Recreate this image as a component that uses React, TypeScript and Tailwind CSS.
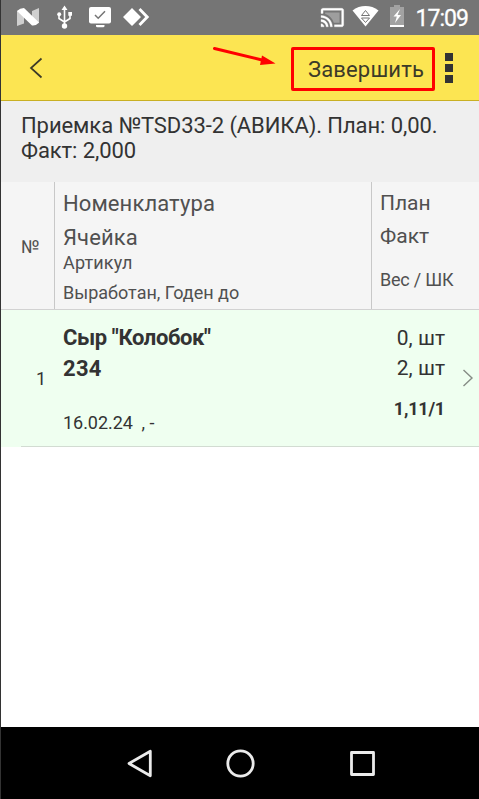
import React from "react";

const rows = [
  {
    id: 1,
    name: 'Сыр "Колобок"',
    cell: "234",
    dates: "16.02.24\u00a0 , -",
    plan: "0, шт",
    fact: "2, шт",
    weight: "1,11/1",
  },
];

function StatusBar() {
  return (
    <div className="h-[35px] shrink-0 bg-[#757575] text-white">
      <svg width="478" height="35" viewBox="1 0 478 35" fill="currentColor">
        {/* android N */}
        <path d="M17 11l7-2v14.500l-7 2.500zM32 11l7-3v15l-7 2z" opacity="0.65" />
        <path d="M17 11Q20 8 24 8L39 22.500Q36 26 32 25.500z" />
        {/* usb */}
        <g stroke="currentColor" strokeWidth="1.600" fill="none">
          <path d="M64.500 9v17M59 15v3.500l5.500 3.500M70 14v4.500l-5.500 3.500" />
        </g>
        <path d="M64.500 5.500l3 4.500h-6zM68.300 12h3.700v3.700h-3.700z" />
        <circle cx="64.500" cy="26" r="2.700" />
        <circle cx="59.200" cy="14.200" r="2" />
        {/* monitor */}
        <rect x="89" y="7" width="22" height="16.500" rx="2" />
        <path d="M96 25h8.500v1q0 1.300-1.500 1.300h-5.500q-1.500 0-1.500-1.300z" />
        <path d="M95 15l3.200 3.200 6.800-7" stroke="#757575" strokeWidth="1.500" fill="none" />
        {/* anydesk */}
        <path d="M132 8l9 9-9 9-9-9zM138.500 10l2-2 8.700 9-8.700 9-2-2 6.700-7z" />
        {/* cast */}
        <g transform="translate(320 5.200) scale(1.030)">
          <path
            d="M21 3H3c-1.100 0-2 .9-2 2v3h2V5h18v14h-7v2h7c1.100 0 2-.9 2-2V5c0-1.100-.9-2-2-2zM1 18v3h3c0-1.660-1.340-3-3-3zm0-4v2c2.760 0 5 2.240 5 5h2c0-3.870-3.130-7-7-7zm0-4v2c4.970 0 9 4.030 9 9h2c0-6.080-4.930-11-11-11z"
            stroke="currentColor"
            strokeWidth="0.300"
          />
          <path d="M5 7v1.600c4 1.200 7.200 4.400 8.400 8.400H19V7z" opacity="0.300" />
        </g>
        {/* wifi */}
        <path d="M365.500 26.500L352.500 10.500C360 4.600 371 4.600 378.500 10.500z" />
        <path d="M361.500 15.500l4-5 4 5zM361.500 18l4 4.500 4-4.500z" stroke="#757575" strokeWidth="1" />
        {/* battery */}
        <path d="M394 5h6v2h4v18h-14V7h4z" opacity="0.330" />
        <path d="M390 25h14v2h-14z" />
        <path d="M400 9l-6.500 7.500h3.300L395 23l6-8h-3.400z" />
        <text x="415.500" y="25.500" fontSize="23" fontWeight="400" stroke="currentColor" strokeWidth="0.300" textLength="53.500" fontFamily="Roboto, sans-serif">
          17:09
        </text>
      </svg>
    </div>
  );
}

function Toolbar() {
  return (
    <div className="relative flex h-[66px] shrink-0 items-center border-b border-[#c9b023] bg-[#fce552] text-[#3c3a28]">
      <button className="ml-[28px]" aria-label="Назад">
        <svg width="14" height="22" viewBox="0 0 14 22" fill="none" stroke="currentColor" strokeWidth="1.700">
          <path d="M12.500 1.500L2 11l10.500 9.500" />
        </svg>
      </button>
      <button className="mt-[2px] ml-auto h-[44px] w-[144px] rounded-[2px] border-3 border-[#ff0000] pl-[14px] text-left text-[22px] leading-[39px] tracking-[0.150px] whitespace-nowrap">
        Завершить
      </button>
      <button className="mr-[26px] ml-[10px] flex flex-col gap-[3px]" aria-label="Меню">
        <span className="size-2 bg-[#333]" />
        <span className="size-2 bg-[#333]" />
        <span className="size-2 bg-[#333]" />
      </button>
      <svg className="absolute top-[10px] left-[210px]" width="70" height="26" viewBox="211 45 70 26">
        <path d="M214.500 48.500L262 60" stroke="#ff0000" strokeWidth="3" strokeLinecap="round" />
        <path d="M275.500 63.500l-15.500 1.500 2-9.500z" fill="#ff0000" />
      </svg>
    </div>
  );
}

function TableHeader() {
  return (
    <div className="flex h-[128px] shrink-0 border-b border-[#d2d2d2] bg-[#f5f5f5] text-[#505050]">
      <div className="w-[53px] pt-[53px] pl-5 text-[18px] leading-6">№</div>
      <div className="w-[317px] border-l border-[#c8c8c8] pt-2 pl-2 text-[22px] leading-7">
        <div className="tracking-[0.100px]">Номенклатура</div>
        <div className="mt-1.5 tracking-[0.100px]">Ячейка</div>
        <div className="-mt-px text-[18px] leading-6 tracking-[0.150px]">Артикул</div>
        <div className="mt-1.5 text-[18px] leading-6">Выработан, Годен до</div>
      </div>
      <div className="flex-1 border-l border-[#c8c8c8] pt-[7px] pl-2 text-[21px] leading-7 whitespace-nowrap">
        <div>План</div>
        <div className="mt-[5px]">Факт</div>
        <div className="mt-[18px] text-[18px] leading-6 tracking-[-0.200px]">Вес / ШК</div>
      </div>
    </div>
  );
}

function Row({ row }: { row: (typeof rows)[number] }) {
  return (
    <div className="h-[137px] shrink-0 bg-[#effff0] pl-5 text-[#333]">
      <div className="flex h-full border-b border-[#d2dcd2]">
        <div className="w-[25px] pt-[57px] text-right text-[18px] leading-6">{row.id}</div>
        <div className="ml-[17px] flex-1 pt-3.5 text-[22px] leading-7">
          <div className="font-bold tracking-[-0.400px]">{row.name}</div>
          <div className="mt-[3px] font-bold tracking-[0.300px]">{row.cell}</div>
          <div className="mt-[28px] text-[18px] leading-6 tracking-[-0.050px]">{row.dates}</div>
        </div>
        <div className="pt-3.5 text-right text-[21px] leading-7">
          <div>{row.plan}</div>
          <div className="mt-0.5">{row.fact}</div>
          <div className="mt-[15px] text-[18px] leading-6 font-bold tracking-[-0.200px]">{row.weight}</div>
        </div>
        <svg className="mt-[59px] mr-[5px] ml-[17px]" width="12" height="18" viewBox="0 0 12 18" fill="none" stroke="#858c85" strokeWidth="1.400">
          <path d="M1.500 1l8.500 8-8.500 8" />
        </svg>
      </div>
    </div>
  );
}

function NavBar() {
  return (
    <div className="h-[72px] shrink-0 bg-black">
      <svg width="478" height="72" viewBox="1 727 478 72" fill="none" stroke="#ebebeb" strokeWidth="2.800" strokeLinejoin="round">
        <path d="M150.300 751.200v24.600L129 763.500z" />
        <circle cx="240.500" cy="763.500" r="12.700" />
        <rect x="351.500" y="752.500" width="22" height="22" />
      </svg>
    </div>
  );
}

export default function App() {
  return (
    <div className="flex h-[799px] w-[479px] flex-col overflow-hidden border-l border-[#333] bg-white font-['Roboto',sans-serif]">
      <StatusBar />
      <Toolbar />
      <div className="h-[81px] shrink-0 bg-[#efefef] pt-3 pl-5 text-[22px] leading-[25px] tracking-[-0.080px] text-[#333]">
        <div className="whitespace-nowrap">Приемка №TSD33-2 (АВИКА). План: 0,00.</div>
        <div>Факт: 2,000</div>
      </div>
      <TableHeader />
      {rows.map((row) => (
        <Row key={row.id} row={row} />
      ))}
      <div className="flex-1" />
      <NavBar />
    </div>
  );
}
